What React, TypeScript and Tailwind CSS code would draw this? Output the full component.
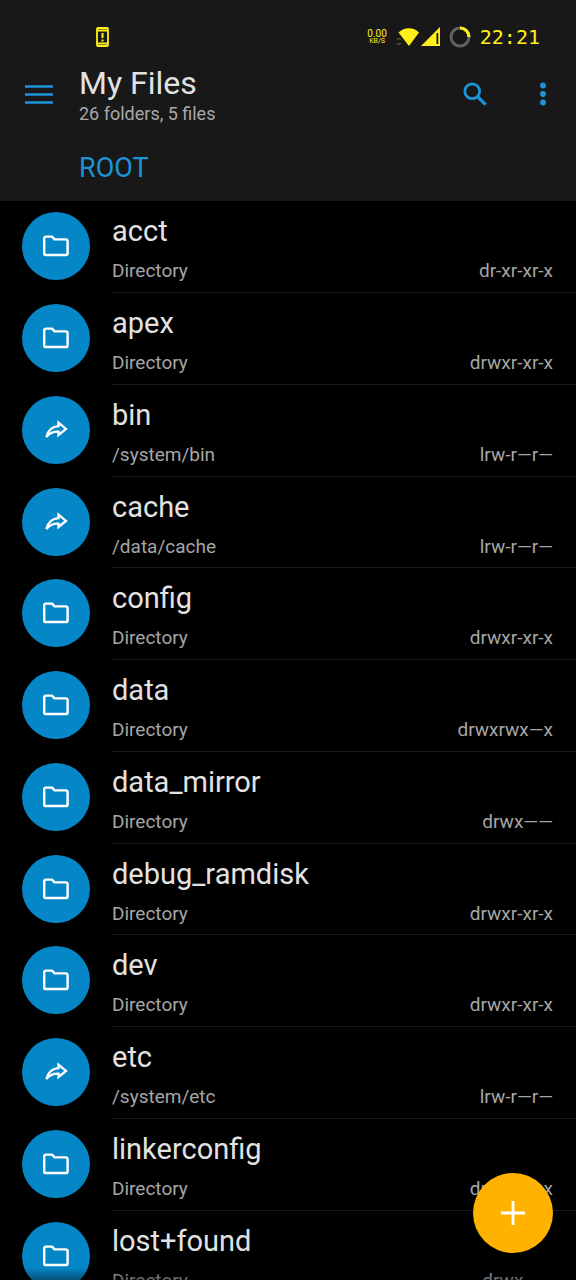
import React from 'react';

interface FileEntry {
  name: string;
  detail: string;
  permissions: string;
  link?: boolean;
}

const entries: FileEntry[] = [
  { name: 'acct', detail: 'Directory', permissions: 'dr-xr-xr-x' },
  { name: 'apex', detail: 'Directory', permissions: 'drwxr-xr-x' },
  { name: 'bin', detail: '/system/bin', permissions: 'lrw-r—r—', link: true },
  { name: 'cache', detail: '/data/cache', permissions: 'lrw-r—r—', link: true },
  { name: 'config', detail: 'Directory', permissions: 'drwxr-xr-x' },
  { name: 'data', detail: 'Directory', permissions: 'drwxrwx—x' },
  { name: 'data_mirror', detail: 'Directory', permissions: 'drwx——' },
  { name: 'debug_ramdisk', detail: 'Directory', permissions: 'drwxr-xr-x' },
  { name: 'dev', detail: 'Directory', permissions: 'drwxr-xr-x' },
  { name: 'etc', detail: '/system/etc', permissions: 'lrw-r—r—', link: true },
  { name: 'linkerconfig', detail: 'Directory', permissions: 'drwxr-xr-x' },
  { name: 'lost+found', detail: 'Directory', permissions: 'drwx——' }
];

function FolderIcon() {
  return (
    <svg className="w-7 h-6" viewBox="0 0 28 24" fill="none" stroke="#fff" strokeWidth="2.4" strokeLinejoin="round">
      <path d="M3.8 2.6H10l2.6 2.8H24a1.6 1.6 0 0 1 1.6 1.6V19.4a1.6 1.6 0 0 1-1.6 1.6H3.8A1.6 1.6 0 0 1 2.2 19.4V4.2a1.6 1.6 0 0 1 1.6-1.6Z" />
    </svg>
  );
}

// Outlined arrow for symlinks
function LinkIcon() {
  return (
    <svg className="w-7 h-6" viewBox="0 0 28 24" fill="none" stroke="#fff" strokeWidth="2.3">
      <path d="M16.5 4.6 24 10.9 16.5 17V13.6C11.5 13.2 8 14.6 4.4 19C6 12.6 10 8.6 16.5 8.2Z" />
    </svg>
  );
}

function StatusBar() {
  return (
    <div className="flex h-[62px] items-center justify-between pl-24 pr-9 pt-3 text-[#fff01a]">
      <svg className="w-[13px] h-5" viewBox="0 0 13 20" fill="none" stroke="currentColor">
        <rect x="1" y="1" width="11" height="18" rx="1" strokeWidth="1.8" />
        <path d="M1 3.5h11M1 16.5h11" strokeWidth="1.8" />
        <path d="M6.5 6v5M6.5 12.5v2" strokeWidth="2" />
      </svg>
      <div className="flex items-center">
        <div className="text-center">
          <p className="text-[10px] leading-[9px]">0.00</p>
          <p className="text-[7px] leading-[7px]">KB/S</p>
        </div>
        <svg className="ml-[9px] w-[44px] h-5" viewBox="0 0 44 20" fill="currentColor">
          <path d="M2.5 5.5C8-.2 18 -.2 23 5.5L13 19Z" />
          <path d="M25 19 44 0V19ZM40.500 6V17h1.800V6Z" fillRule="evenodd" />
          <path d="M1 13l1.8-2 1.8 2M1 16l1.8 2 1.8-2" fill="none" stroke="#77752a" />
        </svg>
        <svg className="ml-[9px] w-[22px] h-[22px]" viewBox="0 0 22 22" fill="none" strokeWidth="3">
          <circle cx="11" cy="11" r="9" stroke="#616161" />
          <path d="M11 2a9 9 0 0 1 9 9" stroke="currentColor" />
        </svg>
        <p className="ml-[9px] font-['DejaVu_Sans_Mono',monospace] text-[20px] leading-6">22:21</p>
      </div>
    </div>
  );
}

export default function App() {
  return (
    <div className="relative flex h-screen flex-col overflow-hidden bg-black font-[Roboto,sans-serif] text-[#e2e2e2]">
      <header className="shrink-0 bg-[#181818]">
        <StatusBar />
        <div className="flex h-[64px] items-center pl-6 pr-[25px]">
          <button aria-label="Open menu" className="text-[#1b95d8]">
            <svg className="w-[30px] h-5" viewBox="0 0 30 20" stroke="currentColor" strokeWidth="2.6">
              <path d="M1 2.5h28M1 10.5h28M1 18.5h28" />
            </svg>
          </button>
          <div className="flex-1 pl-[25px] pt-[6px]">
            <h1 className="text-[32px] leading-[34px]">My Files</h1>
            <p className="text-[18px] leading-7 text-[#a9a9a9]">26 folders, 5 files</p>
          </div>
          <button aria-label="Search" className="text-[#1b95d8]">
            <svg className="w-6 h-6" viewBox="0 0 26 26" fill="none" stroke="currentColor" strokeWidth="3">
              <circle cx="10" cy="10" r="8" />
              <path d="M15.5 15.5 24.5 24.5" strokeWidth="3.6" />
            </svg>
          </button>
          <button aria-label="More options" className="ml-12 text-[#1b95d8]">
            <svg className="w-4 h-6" viewBox="0 0 16 24" fill="currentColor">
              <circle cx="8" cy="3.5" r="2.9" />
              <circle cx="8" cy="12" r="2.9" />
              <circle cx="8" cy="20.5" r="2.9" />
            </svg>
          </button>
        </div>
        <nav className="flex h-[75px] pl-[79px] pt-6">
          <a href="#root" className="h-9 text-[27px] leading-9 text-[#1b95d8]">ROOT</a>
        </nav>
      </header>
      <ul className="min-h-0 flex-1 overflow-y-auto [scrollbar-width:none]">
        {entries.map((entry) => (
          <li key={entry.name} className="h-[92px] nth-[4n]:h-[91px]">
            <button className="flex h-full w-full pl-[22px] text-left">
              <span className="mt-[11px] flex h-[68px] w-[68px] shrink-0 items-center justify-center rounded-full bg-[#0586c6]">
                {entry.link ? <LinkIcon /> : <FolderIcon />}
              </span>
              <span className="ml-[22px] flex h-full min-w-0 flex-1 flex-col border-b border-[#1a1a1a] pr-[23px] pt-[10px]">
                <span className="truncate text-[29px] leading-10">{entry.name}</span>
                <span className="mt-2 flex justify-between text-[19px] leading-6 text-[#a6a6a6]">
                  <span>{entry.detail}</span>
                  <span>{entry.permissions}</span>
                </span>
              </span>
            </button>
          </li>
        ))}
      </ul>
      <div className="pointer-events-none absolute inset-x-0 bottom-0 h-3 bg-linear-to-t from-black/40 to-transparent" />
      <button
        aria-label="Add"
        className="absolute bottom-[27px] right-[23px] flex h-20 w-20 items-center justify-center rounded-full bg-[#ffb300]"
      >
        <svg className="w-6 h-6" viewBox="0 0 24 24" stroke="#fff" strokeWidth="2.8">
          <path d="M12 0v24M0 12h24" />
        </svg>
      </button>
    </div>
  );
}
